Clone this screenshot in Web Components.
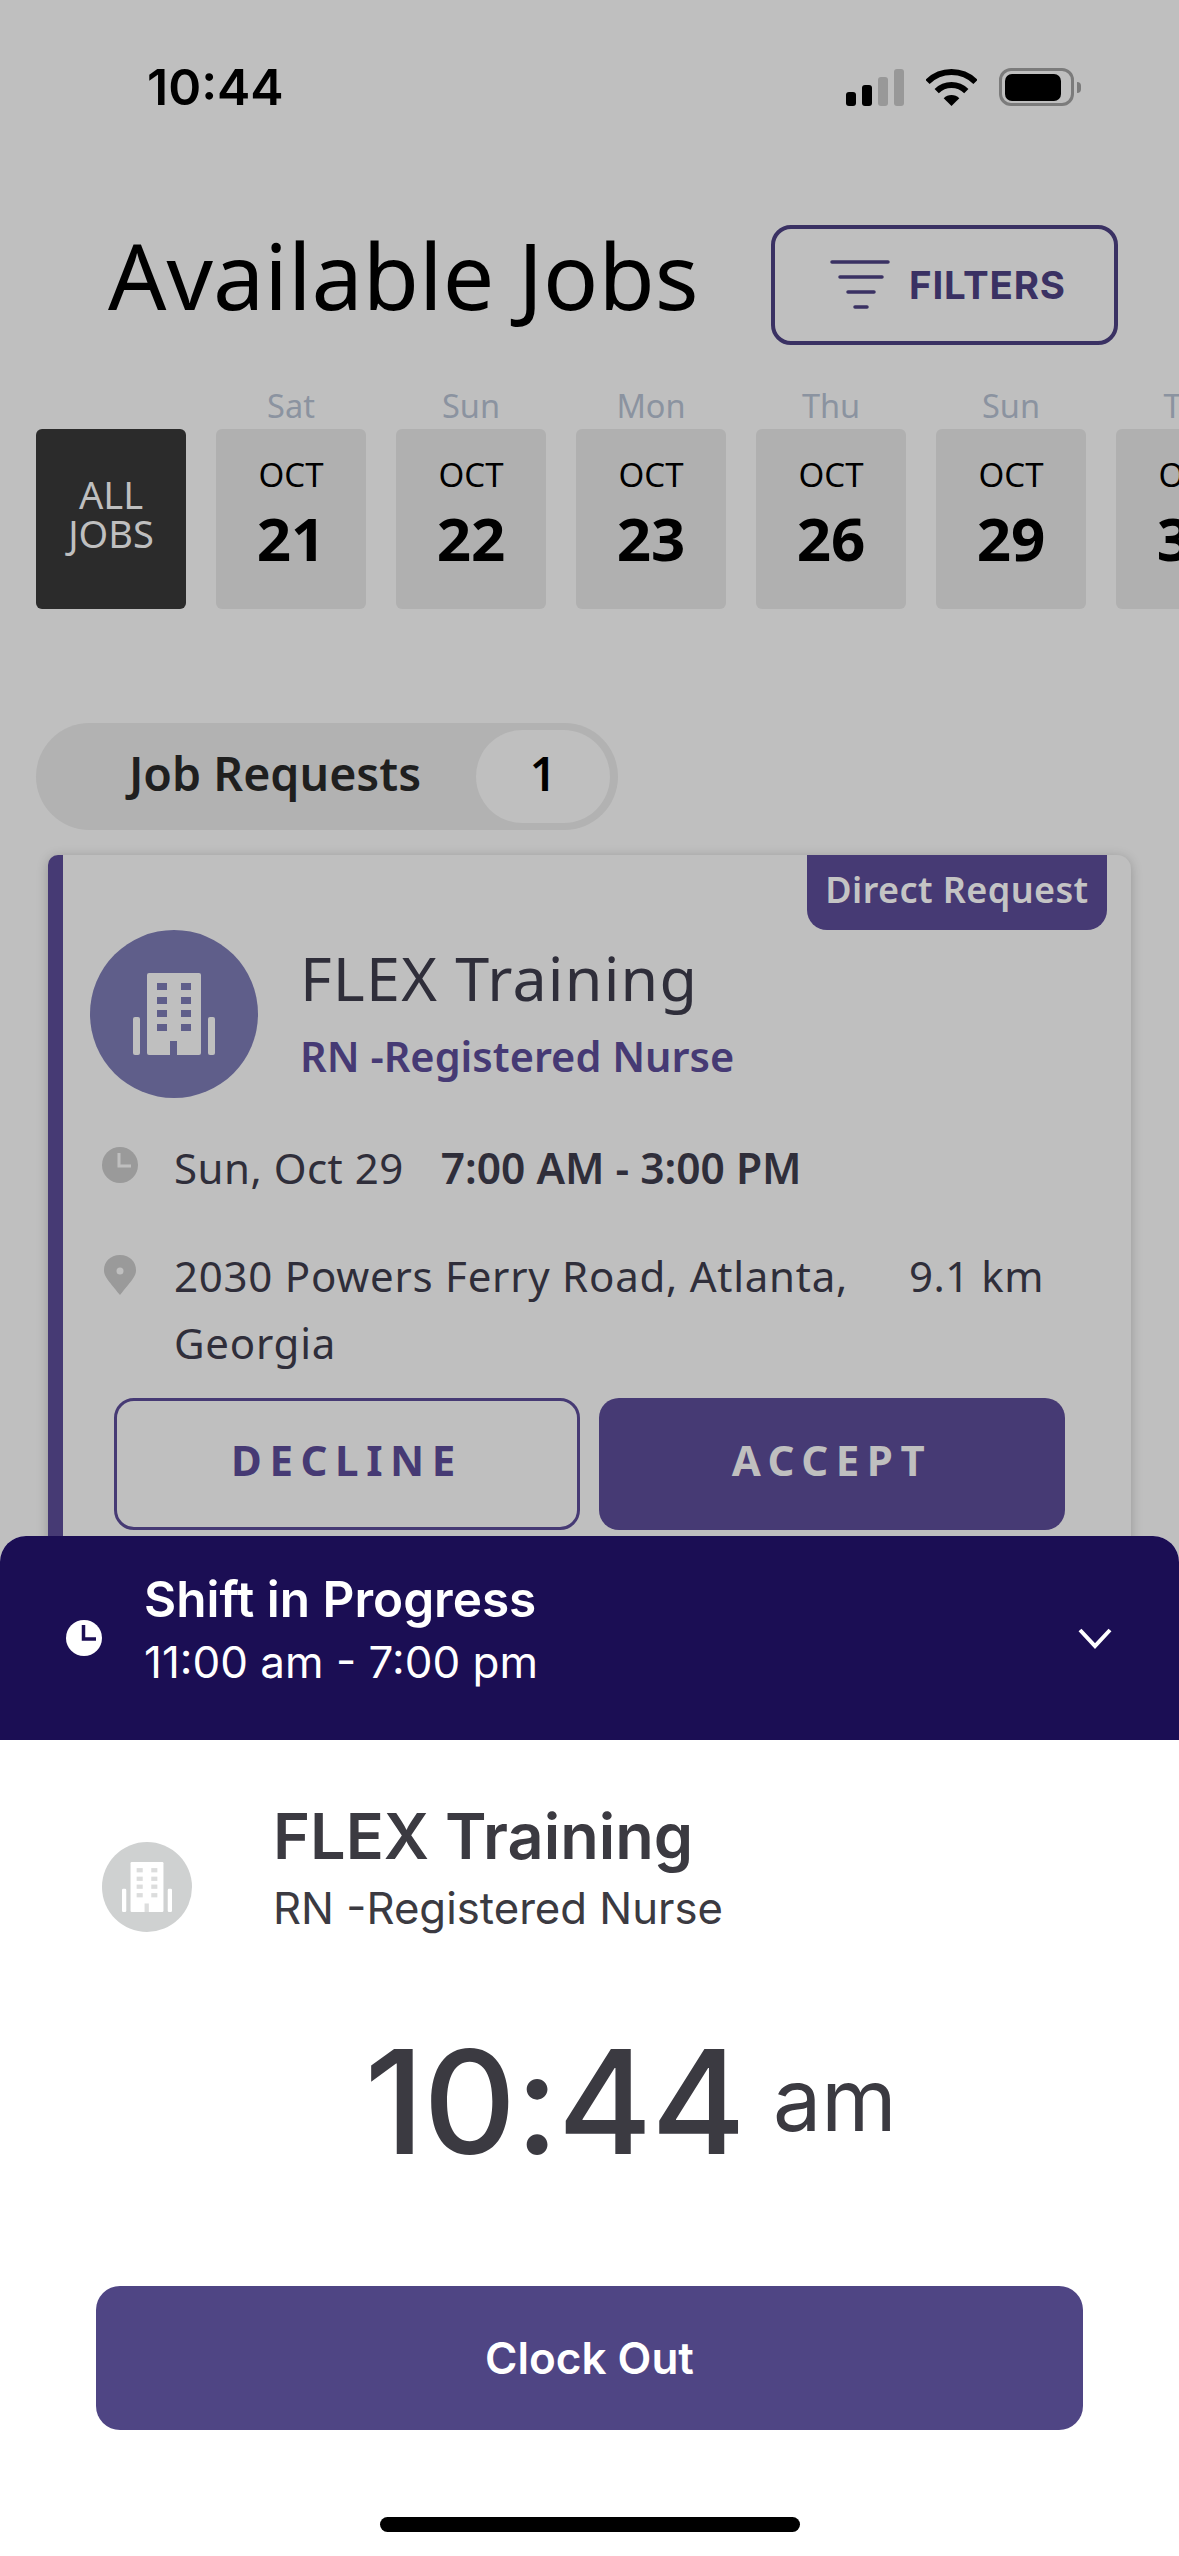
<!DOCTYPE html>
<html lang="en">
<head>
<meta charset="utf-8">
<title>Available Jobs</title>
<style>
  html, body { margin: 0; padding: 0; background: #bfbfbf; }
  body { width: 1179px; height: 2556px; overflow: hidden; position: relative; font-family: "Noto Sans", sans-serif; }
</style>
</head>
<body>
<jobs-screen>
  <status-bar time="10:44"></status-bar>
  <jobs-header title="Available Jobs"></jobs-header>
  <date-strip>
    <date-tile all></date-tile>
    <date-tile day="Sat" month="OCT" date="21"></date-tile>
    <date-tile day="Sun" month="OCT" date="22"></date-tile>
    <date-tile day="Mon" month="OCT" date="23"></date-tile>
    <date-tile day="Thu" month="OCT" date="26"></date-tile>
    <date-tile day="Sun" month="OCT" date="29"></date-tile>
    <date-tile day="Tue" month="OCT" date="31"></date-tile>
  </date-strip>
  <request-pill label="Job Requests" count="1"></request-pill>
  <job-card></job-card>
</jobs-screen>
<shift-sheet></shift-sheet>

<script>
// Gebäude-Icon, wird in der Karte und im Sheet benutzt
function buildingIcon(size, fg, bg) {
  return `<svg width="${size}" height="${size}" viewBox="0 0 82 82" aria-hidden="true">
    <rect x="14" y="0" width="54" height="82" rx="2" fill="${fg}"/>
    <rect x="0" y="44" width="7" height="38" rx="2" fill="${fg}"/>
    <rect x="75" y="44" width="7" height="38" rx="2" fill="${fg}"/>
    <g fill="${bg}">
      <rect x="24" y="10" width="10" height="7"/><rect x="48" y="10" width="10" height="7"/>
      <rect x="24" y="24" width="10" height="7"/><rect x="48" y="24" width="10" height="7"/>
      <rect x="24" y="37" width="10" height="7"/><rect x="48" y="37" width="10" height="7"/>
      <rect x="24" y="51" width="10" height="7"/><rect x="48" y="51" width="10" height="7"/>
      <rect x="37" y="68" width="7" height="14"/>
    </g>
  </svg>`;
}

class JobsScreen extends HTMLElement {
  constructor() {
    super();
    this.attachShadow({ mode: "open" });
    this.shadowRoot.innerHTML = `
      <style>
        :host { display: flex; flex-direction: column; width: 1179px; height: 2556px; overflow: hidden; background: #bfbfbf; }
      </style>
      <slot></slot>`;
  }
}

class StatusBar extends HTMLElement {
  constructor() {
    super();
    this.attachShadow({ mode: "open" });
  }
  connectedCallback() {
    this.shadowRoot.innerHTML = `
      <style>
        :host { display: flex; align-items: center; justify-content: space-between; box-sizing: border-box; height: 38px; margin-top: 68px; padding: 0 98px 0 147px; }
        .time { font: 600 50px/38px Inter, sans-serif; color: #000; }
        .icons { display: flex; align-items: center; gap: 22px; }
        .signal { display: flex; align-items: flex-end; gap: 6px; height: 37px; }
        .signal i { display: block; width: 10px; border-radius: 3px; background: #000; }
        .signal i.off { background: #989898; }
        .battery { display: flex; align-items: center; gap: 3px; }
        .shell { box-sizing: border-box; width: 75px; height: 38px; border: 3px solid #7b7b7b; border-radius: 12px; padding: 3px 10px 2px 3px; }
        .charge { height: 100%; background: #000; border-radius: 7px; }
        .cap { width: 4px; height: 11px; background: #7b7b7b; border-radius: 0 5px 5px 0; }
      </style>
      <span class="time">${this.getAttribute("time")}</span>
      <div class="icons">
        <div class="signal">
          <i style="height:14px"></i><i style="height:21px"></i>
          <i class="off" style="height:29px"></i><i class="off" style="height:37px"></i>
        </div>
        <svg width="51" height="37" viewBox="0 0 51 37" aria-hidden="true">
          <path d="M1.5 13A34 34 0 0 1 49.5 13" fill="none" stroke="#000" stroke-width="6"/>
          <path d="M10.7 22.2A21 21 0 0 1 40.3 22.2" fill="none" stroke="#000" stroke-width="6"/>
          <path d="M25.5 37L17.7 29.2A11 11 0 0 1 33.3 29.2Z" fill="#000"/>
        </svg>
        <div class="battery"><div class="shell"><div class="charge"></div></div><div class="cap"></div></div>
      </div>`;
  }
}

class JobsHeader extends HTMLElement {
  constructor() {
    super();
    this.attachShadow({ mode: "open" });
  }
  connectedCallback() {
    this.shadowRoot.innerHTML = `
      <style>
        :host { display: flex; align-items: center; justify-content: space-between; box-sizing: border-box; height: 120px; margin-top: 119px; padding: 0 61px 0 108px; }
        h1 { margin: 0 0 20px; font: 400 91.5px/120px "Noto Sans", sans-serif; color: #000; }
        button { display: flex; align-items: center; gap: 19px; box-sizing: border-box; flex: none; width: 347px; height: 120px; padding: 0 0 0 55px; background: none; border: 4px solid #3a3163; border-radius: 20px; font: 700 38.5px/1 Inter, sans-serif; color: #3a3163; letter-spacing: .8px; }
      </style>
      <h1>${this.getAttribute("title")}</h1>
      <button>
        <svg width="60" height="50" viewBox="0 0 60 50" aria-hidden="true" stroke="#3a3163" stroke-width="3.5" stroke-linecap="round">
          <path d="M2 2H58M10 17H52M18 32H44M25 47H37"/>
        </svg>
        FILTERS
      </button>`;
  }
}

class DateStrip extends HTMLElement {
  constructor() {
    super();
    this.attachShadow({ mode: "open" });
    this.shadowRoot.innerHTML = `
      <style>
        :host { display: flex; gap: 30px; margin-top: 38px; padding-left: 36px; width: 1179px; box-sizing: border-box; overflow: hidden; }
      </style>
      <slot></slot>`;
  }
}

class DateTile extends HTMLElement {
  constructor() {
    super();
    this.attachShadow({ mode: "open" });
  }
  connectedCallback() {
    const all = this.hasAttribute("all");
    const inner = all
      ? `<div class="all">ALL<br>JOBS</div>`
      : `<div class="month">${this.getAttribute("month")}</div><div class="date">${this.getAttribute("date")}</div>`;
    this.shadowRoot.innerHTML = `
      <style>
        :host { display: flex; flex-direction: column; flex: 0 0 150px; width: 150px; font-family: "Noto Sans", sans-serif; }
        .day { height: 46px; font-size: 32.5px; line-height: 46px; text-align: center; color: #8b93a0; }
        .tile { box-sizing: border-box; height: 180px; border-radius: 6px; background: #b0b0b0; display: flex; flex-direction: column; align-items: center; justify-content: center; }
        :host([all]) .tile { background: #2b2b2b; }
        .all { font-size: 38px; line-height: 39px; color: #bfbfbf; text-align: center; margin-top: -10px; }
        .month { font-size: 33px; line-height: 40px; color: #000; margin-top: -14px; }
        .date { font-size: 60px; line-height: 64px; font-weight: 700; color: #000; margin-top: 11px; }
      </style>
      <div class="day">${this.getAttribute("day") || "&nbsp;"}</div>
      <div class="tile">${inner}</div>`;
  }
}

class RequestPill extends HTMLElement {
  constructor() {
    super();
    this.attachShadow({ mode: "open" });
  }
  connectedCallback() {
    this.shadowRoot.innerHTML = `
      <style>
        :host { display: flex; align-items: center; justify-content: space-between; box-sizing: border-box; align-self: flex-start; width: 582px; height: 107px; margin: 114px 0 0 36px; padding: 0 8px 0 93px; border-radius: 54px; background: #b2b2b2; font: 600 46.5px/1 "Noto Sans", sans-serif; color: #1f1f1f; }
        span { padding-bottom: 6px; }
        .count { box-sizing: border-box; display: flex; align-items: center; justify-content: center; width: 134px; height: 93px; border-radius: 47px; background: #bfbfbf; color: #000; }
      </style>
      <span>${this.getAttribute("label")}</span>
      <span class="count">${this.getAttribute("count")}</span>`;
  }
}

class JobCard extends HTMLElement {
  constructor() {
    super();
    this.attachShadow({ mode: "open" });
  }
  connectedCallback() {
    this.shadowRoot.innerHTML = `
      <style>
        :host { display: block; position: relative; box-sizing: border-box; width: 1083px; height: 760px; margin: 25px 0 0 48px; background: #bfbfbf; border-left: 15px solid #463a74; border-radius: 10px 14px 0 0; box-shadow: 0 2px 12px rgba(0,0,0,.22); font-family: "Noto Sans", sans-serif; color: #2f2e3a; }
        /* Badge liegt oben rechts über der Karte */
        .badge { position: absolute; top: 0; right: 24px; width: 300px; height: 75px; box-sizing: border-box; display: flex; align-items: center; justify-content: center; padding-bottom: 6px; background: #463a74; border-radius: 0 0 20px 20px; color: #c4c4c4; font-size: 36px; font-weight: 600; letter-spacing: .4px; }
        .head { display: flex; align-items: center; gap: 42px; padding: 75px 0 0 27px; }
        .avatar { flex: none; width: 168px; height: 168px; border-radius: 50%; background: #5f5e8a; display: flex; align-items: center; justify-content: center; }
        .title { font-size: 61px; line-height: 68px; letter-spacing: 1.2px; }
        .role { font-size: 41.5px; line-height: 56px; font-weight: 600; color: #463a74; margin-top: 16px; }
        .rows { padding: 36px 0 0 39px; }
        .row { display: flex; gap: 36px; font-size: 42px; line-height: 67px; letter-spacing: .5px; }
        .row + .row { margin-top: 41px; }
        .row svg { flex: none; margin-top: 13px; }
        .row b { font-weight: 600; margin-left: 37px; font-size: 42.5px; letter-spacing: 0; }
        .addr { flex: none; width: 699px; letter-spacing: .75px; }
        .actions { display: flex; gap: 19px; margin: 22px 0 0 51px; }
        .btn { box-sizing: border-box; width: 466px; height: 132px; padding-bottom: 9px; display: flex; align-items: center; justify-content: center; border-radius: 20px; font-size: 42px; font-weight: 700; letter-spacing: 7.6px; }
        .decline { border: 3px solid #463a74; color: #463a74; }
        .accept { background: #463a74; color: #bfbfbf; }
      </style>
      <div class="badge">Direct Request</div>
      <div class="head">
        <div class="avatar">${buildingIcon(82, "#bfbfbf", "#5f5e8a")}</div>
        <div>
          <div class="title">FLEX Training</div>
          <div class="role">RN -Registered Nurse</div>
        </div>
      </div>
      <div class="rows">
        <div class="row">
          <svg width="36" height="36" viewBox="0 0 36 36" aria-hidden="true"><circle cx="18" cy="18" r="18" fill="#9a9a9a"/><path d="M17 6V19H29" fill="none" stroke="#bfbfbf" stroke-width="3"/></svg>
          <div>Sun, Oct 29<b>7:00 AM - 3:00 PM</b></div>
        </div>
        <div class="row">
          <svg width="36" height="40" viewBox="0 0 36 40" aria-hidden="true"><path d="M18 0C8 0 2 7 2 15C2 21 5 24 18 40C31 24 34 21 34 15C34 7 28 0 18 0Z" fill="#9a9a9a"/><circle cx="18" cy="16" r="3.5" fill="#bfbfbf"/></svg>
          <div class="addr">2030 Powers Ferry Road, Atlanta, Georgia</div>
          <div class="dist">9.1 km</div>
        </div>
      </div>
      <div class="actions">
        <div class="btn decline">DECLINE</div>
        <div class="btn accept">ACCEPT</div>
      </div>`;
  }
}

class ShiftSheet extends HTMLElement {
  constructor() {
    super();
    this.attachShadow({ mode: "open" });
  }
  connectedCallback() {
    this.shadowRoot.innerHTML = `
      <style>
        /* Bottom-Sheet liegt über der Liste */
        :host { position: absolute; left: 0; right: 0; bottom: 0; height: 1020px; display: flex; flex-direction: column; background: #fff; border-radius: 26px 26px 0 0; overflow: hidden; font-family: Inter, sans-serif; color: #3b3a41; }
        .bar { flex: none; box-sizing: border-box; height: 204px; display: flex; align-items: center; gap: 42px; padding: 0 67px 0 66px; background: #1b0e54; color: #fff; }
        .bar .txt { flex: 1; margin-bottom: 14px; }
        .bar .a { font-size: 49.5px; line-height: 62px; font-weight: 600; }
        .bar .b { font-size: 44px; line-height: 64px; font-weight: 400; }
        .job { display: flex; align-items: flex-start; gap: 81px; padding: 58px 0 0 102px; }
        .avatar { flex: none; width: 90px; height: 90px; border-radius: 50%; background: #cfd1d1; display: flex; align-items: center; justify-content: center; margin-top: 44px; }
        .name { font-size: 63px; line-height: 76px; font-weight: 600; }
        .role { font-size: 43.7px; line-height: 58px; font-weight: 400; margin-top: 6px; }
        .clock { display: flex; align-items: center; justify-content: center; gap: 28px; margin-top: 76px; padding-left: 82px; line-height: 176px; }
        .clock .t { font-size: 144px; font-weight: 500; letter-spacing: -1px; }
        .clock .m { font-size: 86px; font-weight: 400; margin-bottom: 5px; line-height: 110px; }
        .out { display: flex; align-items: center; justify-content: center; box-sizing: border-box; height: 144px; margin: 96px 96px 0; border-radius: 24px; background: #4f4584; color: #fff; font-size: 44px; font-weight: 600; }
        .home { width: 420px; height: 15px; margin: 87px auto 0; border-radius: 8px; background: #000; }
      </style>
      <div class="bar">
        <svg width="36" height="36" viewBox="0 0 36 36" aria-hidden="true"><circle cx="18" cy="18" r="18" fill="#fff"/><path d="M17.5 5V19H30" fill="none" stroke="#1b0e54" stroke-width="3.5"/></svg>
        <div class="txt">
          <div class="a">Shift in Progress</div>
          <div class="b">11:00 am - 7:00 pm</div>
        </div>
        <svg width="34" height="22" viewBox="0 0 34 22" aria-hidden="true"><path d="M2 3L17 19L32 3" fill="none" stroke="#fff" stroke-width="4"/></svg>
      </div>
      <div class="job">
        <div class="avatar">${buildingIcon(50, "#fff", "#dcdddd")}</div>
        <div>
          <div class="name">FLEX Training</div>
          <div class="role">RN -Registered Nurse</div>
        </div>
      </div>
      <div class="clock"><span class="t">10:44</span><span class="m">am</span></div>
      <div class="out">Clock Out</div>
      <div class="home"></div>`;
  }
}

customElements.define("jobs-screen", JobsScreen);
customElements.define("status-bar", StatusBar);
customElements.define("jobs-header", JobsHeader);
customElements.define("date-strip", DateStrip);
customElements.define("date-tile", DateTile);
customElements.define("request-pill", RequestPill);
customElements.define("job-card", JobCard);
customElements.define("shift-sheet", ShiftSheet);
</script>
</body>
</html>
